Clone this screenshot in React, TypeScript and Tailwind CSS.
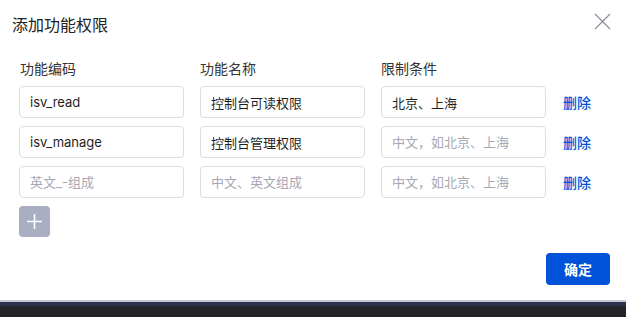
import { useState } from 'react';

type Row = { code: string; name: string; limit: string };

const INITIAL_ROWS: Row[] = [
  { code: 'isv_read', name: '控制台可读权限', limit: '北京、上海' },
  { code: 'isv_manage', name: '控制台管理权限', limit: '' },
  { code: '', name: '', limit: '' },
];

const inputCls =
  'w-[165px] h-[32px] px-[10px] rounded-[4px] border border-[#dcdde6] bg-white text-[13px] text-[#1f1f1f] placeholder-[#a6a8b3] outline-none';

export default function App() {
  const [rows, setRows] = useState<Row[]>(INITIAL_ROWS);

  const update = (i: number, key: keyof Row, v: string) => {
    setRows(rows.map((r, idx) => (idx === i ? { ...r, [key]: v } : r)));
  };

  return (
    <div className="w-[626px] h-[317px] flex flex-col bg-white" style={{ fontFamily: 'Inter, "Noto Sans CJK SC", sans-serif' }}>
      {/* 弹窗主体 */}
      <div className="h-[300px] flex flex-col">
        <div className="flex items-start justify-between pl-3 pr-[15px] pt-[13px]">
          <div className="text-[16px] leading-[24px] text-[#222]">添加功能权限</div>
          <button className="text-[#8b8d96]">
            <svg width="17" height="17" viewBox="0 0 17 17" fill="none" stroke="currentColor" strokeWidth="1.2">
              <path d="M1 1L16 16M16 1L1 16" />
            </svg>
          </button>
        </div>

        <div className="pl-[19px] pt-[21px]">
          {/* 表头 */}
          <div className="flex gap-4 h-5 items-center text-[14px] text-[#333]">
            <div className="w-[165px] pl-[1px]">功能编码</div>
            <div className="w-[165px]">功能名称</div>
            <div className="w-[165px]">限制条件</div>
          </div>

          <div className="mt-2 flex flex-col gap-2">
            {rows.map((r, i) => (
              <div key={i} className="flex items-center gap-4">
                <input className={inputCls} value={r.code} placeholder="英文_-组成" onChange={e => update(i, 'code', e.target.value)} />
                <input className={inputCls} value={r.name} placeholder="中文、英文组成" onChange={e => update(i, 'name', e.target.value)} />
                <input className={inputCls} value={r.limit} placeholder="中文，如北京、上海" onChange={e => update(i, 'limit', e.target.value)} />
                <button className="ml-[1px] text-[14px] font-medium text-[#0052d9]" onClick={() => setRows(rows.filter((_, idx) => idx !== i))}>
                  删除
                </button>
              </div>
            ))}
          </div>

          <button
            className="mt-2 w-[31px] h-[31px] rounded-[4px] bg-[#a9aec3] flex items-center justify-center"
            onClick={() => setRows([...rows, { code: '', name: '', limit: '' }])}
          >
            <svg width="15" height="15" viewBox="0 0 15 15" stroke="white" strokeWidth="1.6">
              <path d="M7.5 0V15M0 7.5H15" />
            </svg>
          </button>
        </div>

        <div className="flex justify-end pr-[16px] mt-[16px]">
          <button className="w-[64px] h-[32px] rounded-[4px] bg-[#0052d9] text-white text-[14px] font-bold">确定</button>
        </div>
      </div>

      {/* 底部背景 */}
      <div className="h-[2px] bg-[#c5c8d9]" />
      <div className="h-[4px] bg-[#2c3350]" />
      <div className="flex-1 bg-[#232428]" />
    </div>
  );
}
